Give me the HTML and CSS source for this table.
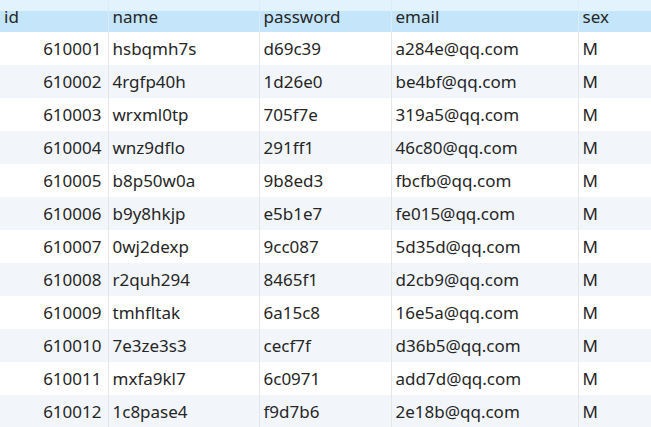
FILE: index.html
```html
<!DOCTYPE html>
<html lang="en">
<head>
    <meta charset="UTF-8">
    <title>user</title>
    <link rel="stylesheet" href="styles.css">
</head>
<body>

    <table class="grid">
        <colgroup>
            <col class="col-id">
            <col class="col-name">
            <col class="col-pass">
            <col class="col-email">
            <col class="col-sex">
        </colgroup>
        <thead>
            <tr>
                <th>id</th>
                <th>name</th>
                <th>password</th>
                <th>email</th>
                <th>sex</th>
            </tr>
        </thead>
        <tbody>
            <tr><td class="num">610001</td><td>hsbqmh7s</td><td>d69c39</td><td>a284e@qq.com</td><td>M</td></tr>
            <tr><td class="num">610002</td><td>4rgfp40h</td><td>1d26e0</td><td>be4bf@qq.com</td><td>M</td></tr>
            <tr><td class="num">610003</td><td>wrxml0tp</td><td>705f7e</td><td>319a5@qq.com</td><td>M</td></tr>
            <tr><td class="num">610004</td><td>wnz9dflo</td><td>291ff1</td><td>46c80@qq.com</td><td>M</td></tr>
            <tr><td class="num">610005</td><td>b8p50w0a</td><td>9b8ed3</td><td>fbcfb@qq.com</td><td>M</td></tr>
            <tr><td class="num">610006</td><td>b9y8hkjp</td><td>e5b1e7</td><td>fe015@qq.com</td><td>M</td></tr>
            <tr><td class="num">610007</td><td>0wj2dexp</td><td>9cc087</td><td>5d35d@qq.com</td><td>M</td></tr>
            <tr><td class="num">610008</td><td>r2quh294</td><td>8465f1</td><td>d2cb9@qq.com</td><td>M</td></tr>
            <tr><td class="num">610009</td><td>tmhfltak</td><td>6a15c8</td><td>16e5a@qq.com</td><td>M</td></tr>
            <tr><td class="num">610010</td><td>7e3ze3s3</td><td>cecf7f</td><td>d36b5@qq.com</td><td>M</td></tr>
            <tr><td class="num">610011</td><td>mxfa9kl7</td><td>6c0971</td><td>add7d@qq.com</td><td>M</td></tr>
            <tr><td class="num">610012</td><td>1c8pase4</td><td>f9d7b6</td><td>2e18b@qq.com</td><td>M</td></tr>
        </tbody>
    </table>

</body>
</html>
```

FILE: styles.css
```css
body {
    margin: 0;
    padding: 0;
    background-color: #ffffff;
    font-family: "Noto Sans", "Noto Sans CJK SC", sans-serif;
    color: #262626;
    overflow: hidden;
}

.grid {
    width: 651px;
    border-collapse: collapse;
    table-layout: fixed;
    font-size: 17px;
}

.col-id { width: 108px; }
.col-name { width: 151px; }
.col-pass { width: 132px; }
.col-email { width: 187px; }
.col-sex { width: 73px; }

.grid th {
    height: 32px;
    padding: 0 4px;
    font-weight: normal;
    text-align: left;
    background: linear-gradient(#e2f3fd 0, #e2f3fd 11px, #c5e5fa 11px, #c5e5fa 100%);
    border-right: 1px solid #d9ecf8;
    box-sizing: border-box;
}

.grid td {
    height: 33px;
    padding: 0 4px;
    white-space: nowrap;
    border-right: 1px solid #e6e6e6;
    box-sizing: border-box;
}

.grid th:last-child, .grid td:last-child {
    border-right: none;
}

.grid tbody tr:nth-child(even) td {
    background-color: #f2f6fb;
}

.grid td.num {
    text-align: right;
    padding-right: 6px;
}
```
